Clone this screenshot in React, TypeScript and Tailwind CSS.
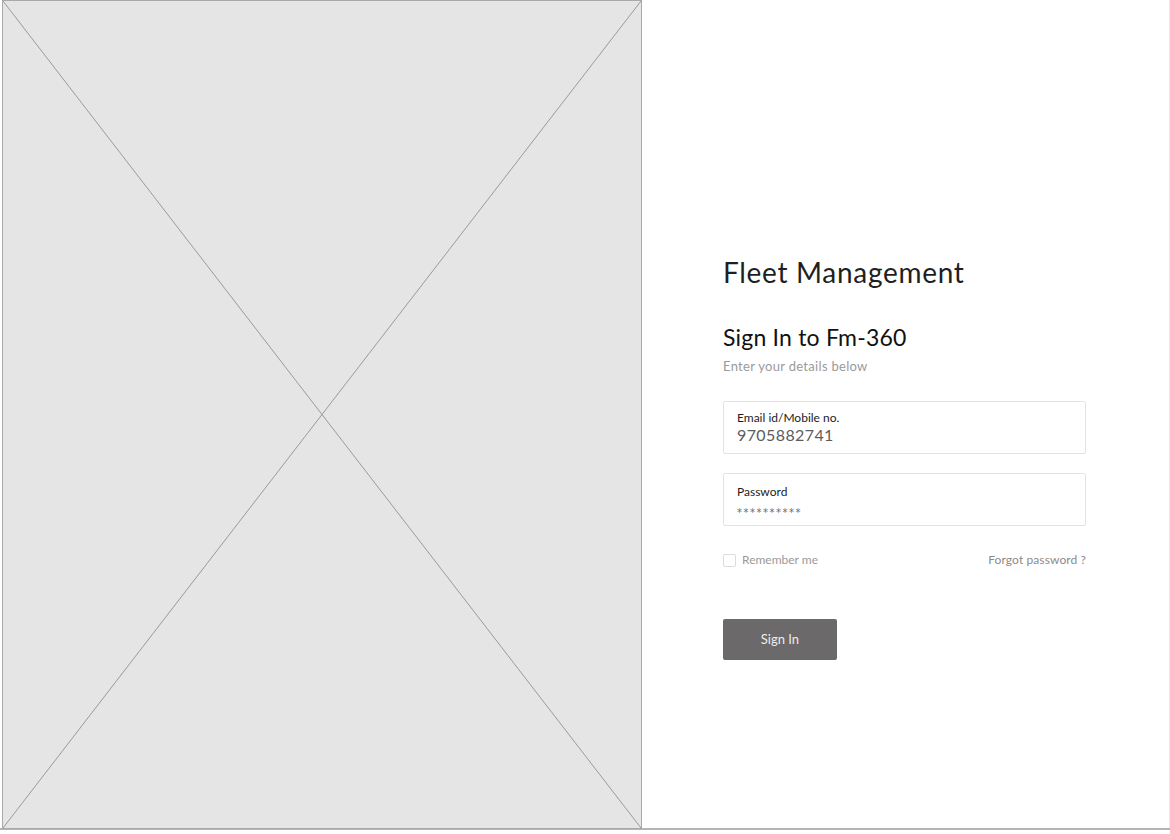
import React from 'react'

const font = { fontFamily: '"Lato", "Noto Sans", sans-serif' }

function Placeholder() {
  return (
    <div className="relative ml-[2px] h-[829px] w-[640px] shrink-0 border border-[#a9a9a9] bg-[#e5e5e5]">
      <svg className="absolute inset-0 h-full w-full" viewBox="0 0 100 100" preserveAspectRatio="none">
        <line x1="0" y1="0" x2="100" y2="100" stroke="#9a9a9a" strokeWidth="1" vectorEffect="non-scaling-stroke" />
        <line x1="100" y1="0" x2="0" y2="100" stroke="#9a9a9a" strokeWidth="1" vectorEffect="non-scaling-stroke" />
      </svg>
    </div>
  )
}

function Field({ label, value, masked }: { label: string; value: string; masked?: boolean }) {
  return (
    <div
      className={
        masked
          ? 'flex h-[53px] w-[363px] flex-col justify-center rounded-[2px] border border-[#e3e3e3] bg-white px-[13px] pt-[4px]'
          : 'flex h-[53px] w-[363px] flex-col justify-center rounded-[2px] border border-[#e3e3e3] bg-white px-[13px]'
      }
    >
      <span className="text-[12px] leading-[15px] text-[#1c1c1c]">{label}</span>
      {masked ? (
        <span className="mt-[8px] font-['DejaVu_Sans',sans-serif] text-[10px] leading-[12px] tracking-[1.5px] text-[#6a6a6a]">{value}</span>
      ) : (
        <span className="text-[16px] leading-[20px] tracking-[0.4px] text-[#5c5c5c]">{value}</span>
      )}
    </div>
  )
}

export default function App() {
  return (
    <div className="h-[834px] w-[1170px] overflow-hidden bg-white" style={font}>
      <div className="flex h-[830px] border-b-[2px] border-[#b5b5b5]">
        <Placeholder />
        <div className="flex flex-1 flex-col border-r border-[#e8e8e8] pl-[81px] pt-[255px]">
          <h1 className="text-[28px] leading-[34px] font-normal tracking-[0.7px] text-[#1f1f1f]">Fleet Management</h1>
          <h2 className="mt-[33px] text-[23px] leading-[30px] font-normal tracking-[0.2px] text-[#111111]">Sign In to Fm-360</h2>
          <p className="mt-[5px] text-[13px] leading-[18px] tracking-[0.3px] text-[#9a9a9a]">Enter your details below</p>

          <div className="mt-[26px] flex flex-col gap-[19px]">
            <Field label="Email id/Mobile no." value="9705882741" />
            <Field label="Password" value="**********" masked />
          </div>

          <div className="mt-[26px] flex w-[363px] items-center justify-between">
            <label className="flex items-center gap-[6px]">
              <span className="h-[13px] w-[13px] rounded-[2px] border border-[#dcdcdc] bg-white" />
              <span className="text-[12px] leading-[16px] text-[#9a9a9a]">Remember me</span>
            </label>
            <span className="text-[12px] leading-[16px] tracking-[0.1px] text-[#8a8a8a]">Forgot password ?</span>
          </div>

          <button className="mt-[51px] h-[41px] w-[114px] rounded-[2px] bg-[#6b6969] text-[13px] text-[#ececec]">
            Sign In
          </button>
        </div>
      </div>
    </div>
  )
}
